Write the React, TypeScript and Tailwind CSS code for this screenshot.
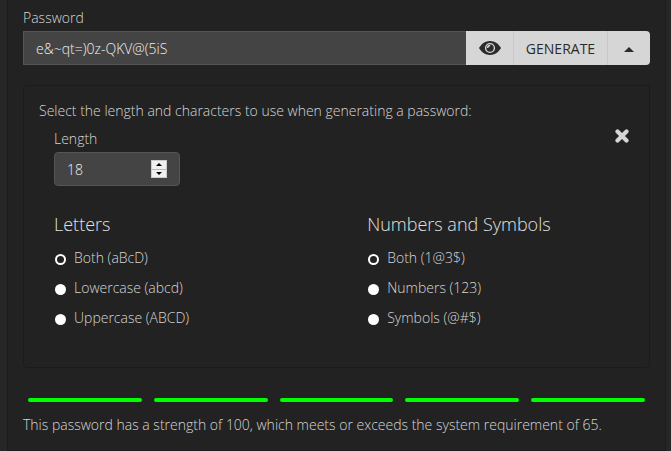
import { useState } from 'react';

const letterOptions = ['Both (aBcD)', 'Lowercase (abcd)', 'Uppercase (ABCD)'];
const symbolOptions = ['Both (1@3$)', 'Numbers (123)', 'Symbols (@#$)'];

function EyeIcon() {
    return (
        <svg viewBox="0 0 22 14" className="h-3.5 w-[22px]" aria-hidden="true">
            <path
                fill="#2b2b2b"
                d="M11 0C17 0 20.7 4.6 22 7C20.7 9.4 17 14 11 14S1.3 9.4 0 7C1.3 4.6 5 0 11 0Z"
            />
            <circle cx="11" cy="7" r="4.4" fill="none" stroke="#d6d6d6" strokeWidth="1.4" />
            <path d="M8.6 7c0-1.6 1-2.6 2.6-2.6" fill="none" stroke="#d6d6d6" strokeWidth="1.5" />
        </svg>
    );
}

type RadioGroupProps = {
    title: string;
    name: string;
    options: string[];
};

function RadioGroup({ title, name, options }: RadioGroupProps) {
    const [selected, setSelected] = useState(options[0]);

    return (
        <fieldset className="min-w-0">
            <legend className="text-lg leading-5 text-[#e0e0e0]">{title}</legend>
            <div className="mt-3.5 flex flex-col gap-2.5">
                {options.map(option => (
                    <label key={option} className="flex h-5 items-center gap-2 pl-px">
                        <input
                            type="radio"
                            name={name}
                            checked={selected === option}
                            onChange={() => setSelected(option)}
                            className="mt-[3px] size-[11px] appearance-none rounded-full bg-white checked:border-2 checked:border-white checked:bg-[#222]"
                        />
                        {option}
                    </label>
                ))}
            </div>
        </fieldset>
    );
}

export default function App() {
    const [password, setPassword] = useState('e&~qt=)0z-QKV@(5iS');
    const [length, setLength] = useState(18);
    const [visible, setVisible] = useState(true);
    const [open, setOpen] = useState(true);

    const generate = () => {
        const chars = 'abcdefghijkmnpqrstuvwxyzABCDEFGHJKLMNPQRSTUVWXYZ0123456789@#$%&()=-~';
        const values = crypto.getRandomValues(new Uint32Array(length));
        setPassword(Array.from(values, v => chars[v % chars.length]).join(''));
    };

    return (
        <div className="min-h-screen bg-[#262626] pr-[5px] pl-[7px] font-['Open_Sans',sans-serif] text-sm leading-5 font-light text-[#d6d6d6]">
            <main className="min-h-screen border-x border-b border-[#1b1b1b] bg-[#222] pt-2 pr-[15px] pb-3 pl-[15px]">
                <label htmlFor="password" className="block">
                    Password
                </label>
                <div className="mt-[3px] flex h-[34px]">
                    <input
                        id="password"
                        type={visible ? 'text' : 'password'}
                        value={password}
                        onChange={e => setPassword(e.target.value)}
                        className="min-w-0 flex-1 border border-r-0 border-[#555] bg-[#444] px-3 pt-0.5 text-[#f0f0f0] outline-none"
                    />
                    <button
                        type="button"
                        aria-label="Toggle password visibility"
                        onClick={() => setVisible(!visible)}
                        className="flex w-12 items-center justify-center border-r border-[#c8c8c8] bg-[#d6d6d6]"
                    >
                        <EyeIcon />
                    </button>
                    <button
                        type="button"
                        onClick={generate}
                        className="w-[94px] border-r border-[#c8c8c8] bg-[#d6d6d6] pt-0.5 font-normal text-[#2b2b2b]"
                    >
                        GENERATE
                    </button>
                    <button
                        type="button"
                        aria-label="Generator options"
                        aria-expanded={open}
                        onClick={() => setOpen(!open)}
                        className="flex w-[42px] items-center justify-center rounded-r-sm bg-[#d6d6d6]"
                    >
                        <svg viewBox="0 0 8 4" className="mt-0.5 h-[5px] w-2.5" aria-hidden="true">
                            <path d="M4 0l4 4H0z" fill="#2b2b2b" />
                        </svg>
                    </button>
                </div>

                {open && (
                    <section className="mt-5 rounded-sm border border-[#1b1b1b] px-[15px] pt-[15px] pb-[39px]">
                        <p>Select the length and characters to use when generating a password:</p>
                        <div className="mt-2 flex items-start justify-between pr-1 pl-[15px]">
                            <div>
                                <label htmlFor="length" className="block">
                                    Length
                                </label>
                                <div className="mt-[3px] flex h-[34px] w-[126px] items-center rounded-sm border border-[#555] bg-[#444] px-3">
                                    <input
                                        id="length"
                                        type="number"
                                        value={length}
                                        onChange={e => setLength(Math.max(1, Number(e.target.value)))}
                                        className="min-w-0 flex-1 appearance-none pt-0.5 text-[#f0f0f0] outline-none [-moz-appearance:textfield] [&::-webkit-inner-spin-button]:appearance-none"
                                    />
                                    <div className="flex h-[18px] w-4 flex-col border border-[#ccc] bg-[#bbb]">
                                        <button
                                            type="button"
                                            aria-label="Increase length"
                                            onClick={() => setLength(length + 1)}
                                            className="flex flex-1 items-center justify-center border-b border-[#bbb] bg-[#f0f0f0]"
                                        >
                                            <svg viewBox="0 0 6 3" className="h-[3px] w-1.5" aria-hidden="true">
                                                <path d="M3 0l3 3H0z" fill="#000" />
                                            </svg>
                                        </button>
                                        <button
                                            type="button"
                                            aria-label="Decrease length"
                                            onClick={() => setLength(Math.max(1, length - 1))}
                                            className="flex flex-1 items-center justify-center bg-[#f0f0f0]"
                                        >
                                            <svg viewBox="0 0 6 3" className="h-[3px] w-1.5" aria-hidden="true">
                                                <path d="M0 0h6L3 3z" fill="#000" />
                                            </svg>
                                        </button>
                                    </div>
                                </div>
                            </div>
                            <button type="button" aria-label="Close" onClick={() => setOpen(false)}>
                                <svg viewBox="0 0 16 16" className="size-4" aria-hidden="true">
                                    <path
                                        d="M3.5 2.5l9 9M12.5 2.5l-9 9"
                                        stroke="#d6d6d6"
                                        strokeWidth="4.2"
                                        strokeLinecap="round"
                                    />
                                </svg>
                            </button>
                        </div>
                        <div className="mt-7 grid grid-cols-[54%_46%] pl-[15px]">
                            <RadioGroup title="Letters" name="letters" options={letterOptions} />
                            <RadioGroup title="Numbers and Symbols" name="symbols" options={symbolOptions} />
                        </div>
                    </section>
                )}

                <div className="mt-[30px] flex gap-3 px-[5px]">
                    {[1, 2, 3, 4, 5].map(i => (
                        <span key={i} className="h-1 flex-1 rounded-full bg-[#0f0]" />
                    ))}
                </div>
                <p className="mt-[13px]">
                    This password has a strength of 100, which meets or exceeds the system requirement of 65.
                </p>
            </main>
        </div>
    );
}
